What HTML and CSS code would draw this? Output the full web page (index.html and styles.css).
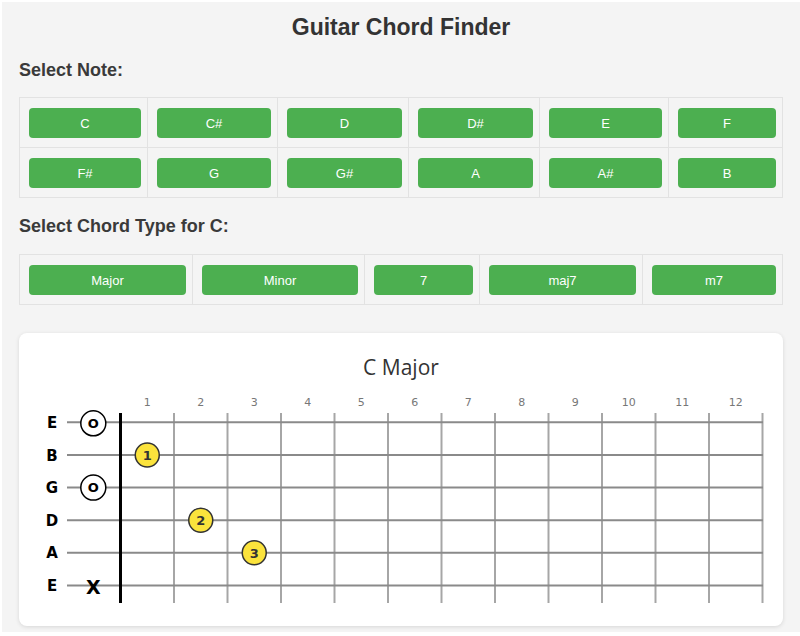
FILE: index.html
```html
<!DOCTYPE html>
<html lang="en">
<head>
<meta charset="utf-8">
<title>Guitar Chord Finder</title>
<link rel="stylesheet" href="styles.css">
</head>
<body>
<h1 class="title">Guitar Chord Finder</h1>

<h2 class="section-title">Select Note:</h2>
<div class="grid notes">
  <div class="cell"><button class="btn">C</button></div>
  <div class="cell"><button class="btn">C#</button></div>
  <div class="cell"><button class="btn">D</button></div>
  <div class="cell"><button class="btn">D#</button></div>
  <div class="cell"><button class="btn">E</button></div>
  <div class="cell"><button class="btn">F</button></div>
  <div class="cell"><button class="btn">F#</button></div>
  <div class="cell"><button class="btn">G</button></div>
  <div class="cell"><button class="btn">G#</button></div>
  <div class="cell"><button class="btn">A</button></div>
  <div class="cell"><button class="btn">A#</button></div>
  <div class="cell"><button class="btn">B</button></div>
</div>

<h2 class="section-title chord-title">Select Chord Type for C:</h2>
<div class="grid chords">
  <div class="cell"><button class="btn">Major</button></div>
  <div class="cell"><button class="btn">Minor</button></div>
  <div class="cell"><button class="btn">7</button></div>
  <div class="cell"><button class="btn">maj7</button></div>
  <div class="cell"><button class="btn">m7</button></div>
</div>

<div class="card">
  <h3 class="chord-name">C Major</h3>
  <svg class="fretboard" width="764" height="240" viewBox="0 0 764 240">
    <g class="frets">
      <line x1="155" y1="28" x2="155" y2="218"/>
      <line x1="208.5" y1="28" x2="208.5" y2="218"/>
      <line x1="262" y1="28" x2="262" y2="218"/>
      <line x1="315.5" y1="28" x2="315.5" y2="218"/>
      <line x1="369" y1="28" x2="369" y2="218"/>
      <line x1="422.5" y1="28" x2="422.5" y2="218"/>
      <line x1="476" y1="28" x2="476" y2="218"/>
      <line x1="529.5" y1="28" x2="529.5" y2="218"/>
      <line x1="583" y1="28" x2="583" y2="218"/>
      <line x1="636.5" y1="28" x2="636.5" y2="218"/>
      <line x1="690" y1="28" x2="690" y2="218"/>
      <line x1="743.5" y1="28" x2="743.5" y2="218"/>
    </g>
    <g class="strings">
      <line x1="48" y1="37.3" x2="744" y2="37.3"/>
      <line x1="48" y1="70" x2="744" y2="70"/>
      <line x1="48" y1="102.6" x2="744" y2="102.6"/>
      <line x1="48" y1="135.2" x2="744" y2="135.2"/>
      <line x1="48" y1="167.8" x2="744" y2="167.8"/>
      <line x1="48" y1="200.4" x2="744" y2="200.4"/>
    </g>
    <line class="nut" x1="101.5" y1="28" x2="101.5" y2="218"/>
    <g class="fret-nums">
      <text x="128.25" y="20.5">1</text>
      <text x="181.75" y="20.5">2</text>
      <text x="235.25" y="20.5">3</text>
      <text x="288.75" y="20.5">4</text>
      <text x="342.25" y="20.5">5</text>
      <text x="395.75" y="20.5">6</text>
      <text x="449.25" y="20.5">7</text>
      <text x="502.75" y="20.5">8</text>
      <text x="556.25" y="20.5">9</text>
      <text x="609.75" y="20.5">10</text>
      <text x="663.25" y="20.5">11</text>
      <text x="716.75" y="20.5">12</text>
    </g>
    <g class="labels">
      <text x="33" y="42.8">E</text>
      <text x="33" y="75.5">B</text>
      <text x="33" y="108.1">G</text>
      <text x="33" y="140.7">D</text>
      <text x="33" y="173.3">A</text>
      <text x="33" y="205.9">E</text>
    </g>
    <g class="open">
      <circle cx="74.3" cy="38.3" r="12.5"/>
      <text x="74.3" y="43">O</text>
      <circle cx="74.3" cy="102.6" r="12.5"/>
      <text x="74.3" y="107.3">O</text>
    </g>
    <text class="muted" x="74.3" y="208.5">X</text>
    <g class="dots">
      <circle cx="128.25" cy="70" r="12"/>
      <text x="128.25" y="74.7">1</text>
      <circle cx="181.75" cy="135.2" r="12"/>
      <text x="181.75" y="139.9">2</text>
      <circle cx="235.25" cy="167.8" r="12"/>
      <text x="235.25" y="172.5">3</text>
    </g>
  </svg>
</div>
</body>
</html>
```
FILE: styles.css
```css
html {
  background: #ffffff;
}
body {
  margin: 2px 0 0 2px;
  padding: 11px 17px 6px 17px;
  background: #f4f4f4;
  font-family: "Liberation Sans", Arial, sans-serif;
  color: #333;
}
.title {
  margin: 0;
  font-size: 23px;
  line-height: 28px;
  font-weight: bold;
  text-align: center;
  color: #333;
}
.section-title {
  margin: 18px 0 16px 0;
  font-size: 18px;
  line-height: 22px;
  font-weight: bold;
  color: #3a3a3a;
}
.chord-title {
  margin: 17px 0 17px 0;
}
.grid {
  display: grid;
  gap: 1px;
  padding: 1px;
  background: #e2e2e2;
  width: 762px;
}
.notes {
  grid-template-columns: 127px 129px 130px 130px 128px 113px;
}
.chords {
  grid-template-columns: 172px 171px 114px 162px 139px;
}
.cell {
  background: #f4f4f4;
  padding: 10px 6px 9px 9px;
  display: flex;
}
.btn {
  flex: 1;
  height: 30px;
  border: none;
  border-radius: 4px;
  background: #4caf50;
  color: #fff;
  font-family: "Liberation Sans", Arial, sans-serif;
  font-size: 13px;
  padding: 0;
}
.card {
  margin-top: 28px;
  background: #fff;
  border-radius: 8px;
  box-shadow: 0 1px 4px rgba(0, 0, 0, 0.12);
  padding: 22px 0 1px 0;
  width: 764px;
}
.chord-name {
  margin: 0 0 6px 0;
  font-family: "Open Sans", "Noto Sans", sans-serif;
  font-weight: normal;
  font-size: 21px;
  line-height: 24px;
  text-align: center;
  color: #333;
}
.fretboard {
  display: block;
}
.frets line {
  stroke: #a6a6a6;
  stroke-width: 2;
}
.strings line {
  stroke: #8a8a8a;
  stroke-width: 2;
}
.nut {
  stroke: #000;
  stroke-width: 3;
}
.fret-nums text {
  font-family: "DejaVu Sans", sans-serif;
  font-size: 11px;
  fill: #777;
  text-anchor: middle;
}
.labels text {
  font-family: "DejaVu Sans", sans-serif;
  font-weight: bold;
  font-size: 15px;
  fill: #000;
  text-anchor: middle;
}
.open circle {
  fill: #fff;
  stroke: #000;
  stroke-width: 1.5;
}
.open text {
  font-family: "DejaVu Sans", sans-serif;
  font-weight: bold;
  font-size: 13px;
  fill: #000;
  text-anchor: middle;
}
.muted {
  font-family: "DejaVu Sans", sans-serif;
  font-weight: bold;
  font-size: 19px;
  fill: #000;
  text-anchor: middle;
}
.dots circle {
  fill: #fbe33c;
  stroke: #333;
  stroke-width: 1.5;
}
.dots text {
  font-family: "DejaVu Sans", sans-serif;
  font-weight: bold;
  font-size: 13px;
  fill: #333;
  text-anchor: middle;
}
```
